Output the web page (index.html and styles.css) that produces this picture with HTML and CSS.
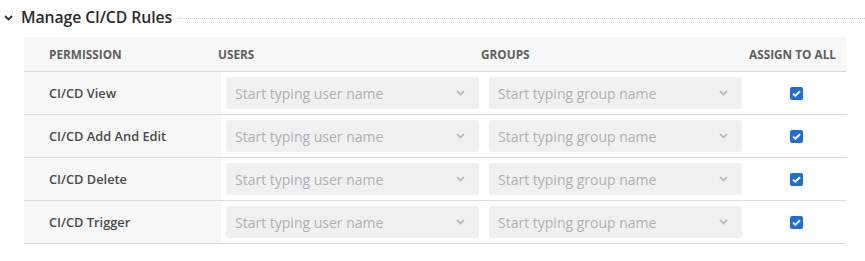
FILE: index.html
```html
<!DOCTYPE html>
<html lang="en">
<head>
  <meta charset="UTF-8" />
  <meta name="viewport" content="width=device-width, initial-scale=1.0" />
  <title>Manage CI/CD Rules</title>
  <link rel="stylesheet" href="styles.css">
</head>
<body>
  <div class="section-head">
    <svg class="caret" width="9" height="6" viewBox="0 0 9 6"><path d="M1 1l3.5 3.5L8 1" fill="none" stroke="#333" stroke-width="1.8"/></svg>
    <span class="section-title">Manage CI/CD Rules</span>
    <span class="section-rule"></span>
  </div>

  <div class="rules">
    <div class="rules-head">
      <div>PERMISSION</div>
      <div>USERS</div>
      <div>GROUPS</div>
      <div>ASSIGN TO ALL</div>
    </div>
    <div id="rows"></div>
  </div>

  <script>
    // one row per permission
    const perms = ['CI/CD View', 'CI/CD Add And Edit', 'CI/CD Delete', 'CI/CD Trigger'];
    const arrow = '<svg width="9" height="6" viewBox="0 0 9 6"><path d="M1 1l3.5 3.5L8 1" fill="none" stroke="#b5b5b5" stroke-width="1.6"/></svg>';

    perms.forEach(name => {
      const row = document.createElement('div');
      row.className = 'rule-row';
      row.innerHTML = `
        <div class="perm">${name}</div>
        <div class="pick"><div class="select"><span>Start typing user name</span>${arrow}</div></div>
        <div class="pick"><div class="select"><span>Start typing group name</span>${arrow}</div></div>
        <div class="all"><span class="check"><svg width="9" height="7" viewBox="0 0 9 7"><path d="M1 3.6l2.3 2.2L8 1.2" fill="none" stroke="#fff" stroke-width="1.9"/></svg></span></div>
      `;
      document.getElementById('rows').appendChild(row);
    });
  </script>
</body>
</html>
```

FILE: styles.css
```css
body {
  font-family: 'Open Sans', 'Noto Sans', Arial, sans-serif;
  margin: 0;
  padding: 0;
  background-color: #fff;
  color: #333;
}
.section-head {
  display: flex;
  align-items: center;
  height: 34px;
  padding-left: 4px;
}
.caret {
  margin-right: 8px;
  margin-top: 1px;
}
.section-title {
  font-size: 15.8px;
  font-weight: 600;
  color: #2b2b2b;
  letter-spacing: -0.1px;
}
.section-rule {
  flex: 1;
  margin-left: 6px;
  margin-top: 2px;
  border-top: 1px dotted #c8c8c8;
}
.rules {
  margin-left: 24px;
  width: 822px;
  margin-top: 3px;
}
.rules-head {
  display: grid;
  grid-template-columns: 194px 263px 268px 1fr;
  height: 34px;
  align-items: center;
  background-color: #f7f7f7;
  border-bottom: 1px solid #dcdcdc;
  font-size: 11.8px;
  font-weight: 700;
  color: #5f5f5f;
}
.rules-head div:first-child {
  padding-left: 25px;
}
.rule-row {
  display: grid;
  grid-template-columns: 197px 263px 263px 1fr;
  height: 42px;
  border-bottom: 1px solid #dcdcdc;
}
.perm {
  background-color: #f7f7f7;
  display: flex;
  align-items: center;
  padding-left: 25px;
  font-size: 12.8px;
  font-weight: 600;
  color: #4a4a4a;
}
.pick {
  display: flex;
  align-items: center;
  padding: 0 5px;
}
.select {
  flex: 1;
  height: 32px;
  border-radius: 3px;
  background-color: #eef0f2;
  display: flex;
  align-items: center;
  justify-content: space-between;
  padding: 0 14px 0 9px;
  font-size: 14px;
  color: #aeb1b5;
}
.all {
  display: flex;
  align-items: center;
  justify-content: center;
}
.check {
  width: 13px;
  height: 13px;
  border-radius: 2px;
  background-color: #1a6fdd;
  display: flex;
  align-items: center;
  justify-content: center;
}
```
